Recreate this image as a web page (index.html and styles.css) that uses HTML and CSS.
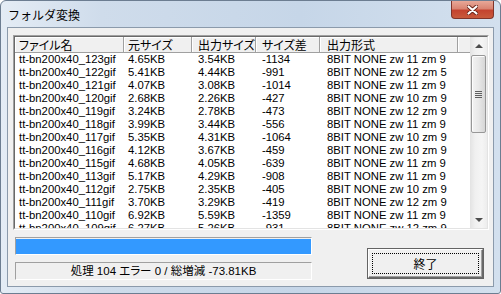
FILE: index.html
```html
<!DOCTYPE html>
<html lang="ja">
<head>
    <meta charset="UTF-8">
    <title>フォルダ変換</title>
    <link rel="stylesheet" href="styles.css">
</head>
<body>
    <div class="window">
        <div class="titlebar">
            <span class="title">フォルダ変換</span>
            <div class="close-box">
                <svg width="11" height="10" viewBox="0 0 11 10">
                    <path d="M1.5 1.5 L9.5 8.5 M9.5 1.5 L1.5 8.5" stroke="#6b2418" stroke-width="4" stroke-linecap="round"/>
                    <path d="M1.5 1.5 L9.5 8.5 M9.5 1.5 L1.5 8.5" stroke="#ffffff" stroke-width="2.2" stroke-linecap="round"/>
                </svg>
            </div>
        </div>
        <div class="client">
            <div class="listview">
                <div class="listview-in">
                    <div class="list-main">
                        <div class="list-header">
                            <div class="hcell c1">ファイル名</div>
                            <div class="hcell c2">元サイズ</div>
                            <div class="hcell c3">出力サイズ</div>
                            <div class="hcell c4">サイズ差</div>
                            <div class="hcell c5">出力形式</div>
                            <div class="hcell filler"></div>
                        </div>
                        <div class="list-rows">
                            <div class="row"><span class="c1">tt-bn200x40_123gif</span><span class="c2">4.65KB</span><span class="c3">3.54KB</span><span class="c4">-1134</span><span class="c5">8BIT NONE zw 11 zm 9</span></div>
                            <div class="row"><span class="c1">tt-bn200x40_122gif</span><span class="c2">5.41KB</span><span class="c3">4.44KB</span><span class="c4">-991</span><span class="c5">8BIT NONE zw 12 zm 5</span></div>
                            <div class="row"><span class="c1">tt-bn200x40_121gif</span><span class="c2">4.07KB</span><span class="c3">3.08KB</span><span class="c4">-1014</span><span class="c5">8BIT NONE zw 11 zm 9</span></div>
                            <div class="row"><span class="c1">tt-bn200x40_120gif</span><span class="c2">2.68KB</span><span class="c3">2.26KB</span><span class="c4">-427</span><span class="c5">8BIT NONE zw 10 zm 9</span></div>
                            <div class="row"><span class="c1">tt-bn200x40_119gif</span><span class="c2">3.24KB</span><span class="c3">2.78KB</span><span class="c4">-473</span><span class="c5">8BIT NONE zw 12 zm 9</span></div>
                            <div class="row"><span class="c1">tt-bn200x40_118gif</span><span class="c2">3.99KB</span><span class="c3">3.44KB</span><span class="c4">-556</span><span class="c5">8BIT NONE zw 11 zm 9</span></div>
                            <div class="row"><span class="c1">tt-bn200x40_117gif</span><span class="c2">5.35KB</span><span class="c3">4.31KB</span><span class="c4">-1064</span><span class="c5">8BIT NONE zw 10 zm 9</span></div>
                            <div class="row"><span class="c1">tt-bn200x40_116gif</span><span class="c2">4.12KB</span><span class="c3">3.67KB</span><span class="c4">-459</span><span class="c5">8BIT NONE zw 10 zm 9</span></div>
                            <div class="row"><span class="c1">tt-bn200x40_115gif</span><span class="c2">4.68KB</span><span class="c3">4.05KB</span><span class="c4">-639</span><span class="c5">8BIT NONE zw 11 zm 9</span></div>
                            <div class="row"><span class="c1">tt-bn200x40_113gif</span><span class="c2">5.17KB</span><span class="c3">4.29KB</span><span class="c4">-908</span><span class="c5">8BIT NONE zw 11 zm 9</span></div>
                            <div class="row"><span class="c1">tt-bn200x40_112gif</span><span class="c2">2.75KB</span><span class="c3">2.35KB</span><span class="c4">-405</span><span class="c5">8BIT NONE zw 10 zm 9</span></div>
                            <div class="row"><span class="c1">tt-bn200x40_111gif</span><span class="c2">3.70KB</span><span class="c3">3.29KB</span><span class="c4">-419</span><span class="c5">8BIT NONE zw 12 zm 9</span></div>
                            <div class="row"><span class="c1">tt-bn200x40_110gif</span><span class="c2">6.92KB</span><span class="c3">5.59KB</span><span class="c4">-1359</span><span class="c5">8BIT NONE zw 11 zm 9</span></div>
                            <div class="row"><span class="c1">tt-bn200x40_109gif</span><span class="c2">6.27KB</span><span class="c3">5.26KB</span><span class="c4">-931</span><span class="c5">8BIT NONE zw 12 zm 9</span></div>
                        </div>
                    </div>
                    <div class="scrollbar">
                        <div class="sb-arrow"><span class="tri-up"></span></div>
                        <div class="sb-track">
                            <div class="sb-thumb"><span class="grip"></span></div>
                        </div>
                        <div class="sb-arrow"><span class="tri-down"></span></div>
                    </div>
                </div>
            </div>
            <div class="bottom">
                <div class="bottom-left">
                    <div class="progress"><div class="progress-fill"></div></div>
                    <div class="status">処理 104 エラー 0 / 総増減 -73.81KB</div>
                </div>
                <div class="btn-end">
                    <div class="btn-face"><div class="btn-focus">終了</div></div>
                </div>
            </div>
        </div>
    </div>
</body>
</html>
```

FILE: styles.css
```css
body {
    margin: 0;
    padding: 0;
    width: 501px;
    height: 294px;
    overflow: hidden;
    background: #ffffff;
    font-family: "Liberation Sans", "Noto Sans CJK JP", sans-serif;
    font-size: 12px;
    color: #000;
}
.window {
    box-sizing: border-box;
    width: 501px;
    height: 294px;
    border: 1px solid #6c7d91;
    border-radius: 6px 6px 3px 3px;
    padding: 0 6px 6px 6px;
    background: linear-gradient(90deg, #e4ecf5 0%, #cfdceb 20%, #c6d6e8 60%, #d3e0ee 100%);
    display: flex;
    flex-direction: column;
}
.titlebar {
    height: 26px;
    display: flex;
    align-items: flex-start;
}
.title {
    margin: 6px 0 0 1px;
    font-family: "Noto Sans CJK JP", sans-serif;
    font-size: 12px;
    line-height: 16px;
}
.close-box {
    margin-left: auto;
    width: 43px;
    height: 18px;
    box-sizing: border-box;
    border: 1px solid #80342a;
    border-top: none;
    border-radius: 0 0 4px 4px;
    background: linear-gradient(#e8a898 0%, #d98472 45%, #c4432f 55%, #c85a3c 100%);
    display: flex;
    align-items: center;
    justify-content: center;
}
.client {
    flex: 1;
    border: 1px solid #8b9aab;
    background: #f0f0f0;
    padding-top: 7px;
}
.listview {
    margin: 0 4px 0 5px;
    height: 195px;
    box-sizing: border-box;
    border: 1px solid;
    border-color: #a0a0a0 #ffffff #ffffff #a0a0a0;
}
.listview-in {
    height: 100%;
    box-sizing: border-box;
    border: 1px solid;
    border-color: #696969 #e3e3e3 #e3e3e3 #696969;
    background: #fff;
    display: flex;
    overflow: hidden;
}
.list-main {
    flex: 1;
    overflow: hidden;
}
.list-header {
    display: flex;
    height: 16px;
}
.hcell {
    box-sizing: border-box;
    height: 16px;
    background: #f0f0f0;
    border-right: 1px solid #a0a0a0;
    border-bottom: 1px solid #a0a0a0;
    box-shadow: inset 1px 1px #ffffff;
    font-family: "Noto Sans CJK JP", sans-serif;
    font-feature-settings: "palt";
    line-height: 15px;
    white-space: nowrap;
}
.hcell.filler {
    flex: 1;
    border-right: none;
}
.c1 { width: 109px; padding-left: 4px; }
.c2 { width: 68px; padding-left: 4px; }
.c3 { width: 64px; padding-left: 6px; }
.c4 { width: 64px; padding-left: 6px; }
.c5 { width: 138px; padding-left: 7px; }
.c1, .c2, .c3, .c4, .c5 {
    box-sizing: border-box;
    flex: none;
}
.row {
    display: flex;
    height: 13px;
    line-height: 13px;
    font-size: 11.3px;
    white-space: nowrap;
}
.row span {
    display: block;
    overflow: hidden;
}
.scrollbar {
    width: 17px;
    display: flex;
    flex-direction: column;
    background: linear-gradient(90deg, #e3e3e3, #f0f0f0 30%, #f5f5f5 70%, #ededed);
}
.sb-arrow {
    height: 17px;
    display: flex;
    align-items: center;
    justify-content: center;
}
.tri-up {
    border-left: 4px solid transparent;
    border-right: 4px solid transparent;
    border-bottom: 4px solid #4d4d4d;
}
.tri-down {
    border-left: 4px solid transparent;
    border-right: 4px solid transparent;
    border-top: 4px solid #4d4d4d;
}
.sb-track {
    flex: 1;
    padding-top: 1px;
}
.sb-thumb {
    margin: 0 1px;
    height: 78px;
    box-sizing: border-box;
    border: 1px solid #979797;
    border-radius: 2px;
    background: linear-gradient(90deg, #f3f3f3, #e8e8e8 50%, #d6d6d6);
    box-shadow: inset 1px 1px #fdfdfd;
    display: flex;
    align-items: center;
    justify-content: center;
}
.grip {
    width: 7px;
    height: 7px;
    background: repeating-linear-gradient(#5f5f5f 0, #5f5f5f 1px, transparent 1px, transparent 2px);
}
.bottom {
    display: flex;
    align-items: flex-start;
    margin-top: 7px;
    padding-left: 7px;
}
.bottom-left {
    width: 297px;
}
.progress {
    height: 18px;
    box-sizing: border-box;
    border: 1px solid;
    border-color: #a0a0a0 #ffffff #ffffff #a0a0a0;
    padding: 1px 0 0 0;
}
.progress-fill {
    height: 100%;
    background: #3399ff;
}
.status {
    margin-top: 7px;
    height: 18px;
    box-sizing: border-box;
    border: 1px solid;
    border-color: #a0a0a0 #ffffff #ffffff #a0a0a0;
    text-align: center;
    line-height: 16px;
    font-size: 11.5px;
    font-feature-settings: "palt";
}
.btn-end {
    margin: 11px 9px 0 auto;
    width: 117px;
    height: 31px;
    box-sizing: border-box;
    border: 1px solid #646464;
}
.btn-face {
    height: 100%;
    box-sizing: border-box;
    border: 1px solid;
    border-color: #ffffff #696969 #696969 #ffffff;
    box-shadow: inset -1px -1px #a0a0a0;
    padding: 3px;
}
.btn-focus {
    height: 100%;
    box-sizing: border-box;
    border: 1px dotted #000;
    display: flex;
    align-items: center;
    justify-content: center;
    font-family: "Noto Sans CJK JP", sans-serif;
}
```
